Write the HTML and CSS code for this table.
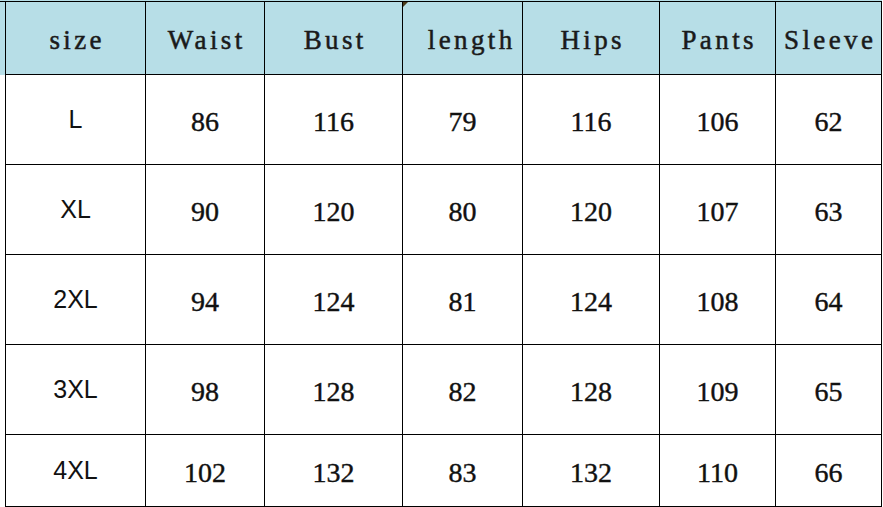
FILE: index.html
```html
<!DOCTYPE html>
<html>
<head>
<meta charset="utf-8">
<link rel="stylesheet" href="styles.css">
</head>
<body>
<div class="sheet">
  <div class="row head">
    <div class="stub"></div>
    <div class="cell c1">size</div>
    <div class="cell c2">Waist</div>
    <div class="cell c3">Bust</div>
    <div class="cell c4 marked"><span class="lead">length</span><i class="corner"></i></div>
    <div class="cell c5">Hips</div>
    <div class="cell c6">Pants</div>
    <div class="cell c7">Sleeve</div>
  </div>
  <div class="row">
    <div class="stub"></div>
    <div class="cell c1 sz">L</div>
    <div class="cell c2">86</div>
    <div class="cell c3">116</div>
    <div class="cell c4">79</div>
    <div class="cell c5">116</div>
    <div class="cell c6">106</div>
    <div class="cell c7">62</div>
  </div>
  <div class="row">
    <div class="stub"></div>
    <div class="cell c1 sz">XL</div>
    <div class="cell c2">90</div>
    <div class="cell c3">120</div>
    <div class="cell c4">80</div>
    <div class="cell c5">120</div>
    <div class="cell c6">107</div>
    <div class="cell c7">63</div>
  </div>
  <div class="row">
    <div class="stub"></div>
    <div class="cell c1 sz">2XL</div>
    <div class="cell c2">94</div>
    <div class="cell c3">124</div>
    <div class="cell c4">81</div>
    <div class="cell c5">124</div>
    <div class="cell c6">108</div>
    <div class="cell c7">64</div>
  </div>
  <div class="row">
    <div class="stub"></div>
    <div class="cell c1 sz">3XL</div>
    <div class="cell c2">98</div>
    <div class="cell c3">128</div>
    <div class="cell c4">82</div>
    <div class="cell c5">128</div>
    <div class="cell c6">109</div>
    <div class="cell c7">65</div>
  </div>
  <div class="row last">
    <div class="stub"></div>
    <div class="cell c1 sz">4XL</div>
    <div class="cell c2">102</div>
    <div class="cell c3">132</div>
    <div class="cell c4">83</div>
    <div class="cell c5">132</div>
    <div class="cell c6">110</div>
    <div class="cell c7">66</div>
  </div>
</div>
</body>
</html>
```
FILE: styles.css
```css
html, body {
  margin: 0;
  padding: 0;
  background: #ffffff;
}

.sheet {
  width: 883px;
  display: flex;
  flex-direction: column;
  font-family: "Liberation Serif", "Times New Roman", serif;
  color: #111;
}

.row {
  display: flex;
  height: 90px;
}

.row.head {
  height: 73px;
  background: #b7dee7;
  border-top: 1px solid #000;
  margin-top: 1px;
  box-shadow: 0 -1px 0 #b7dee7;
  width: 882px;
}

.row.last {
  height: 72px;
}

.stub {
  width: 5px;
  flex: none;
  border-right: 1px solid #000;
}

.cell {
  flex: none;
  box-sizing: border-box;
  border-right: 1px solid #000;
  border-bottom: 1px solid #000;
  display: flex;
  align-items: center;
  justify-content: center;
  font-size: 28px;
  padding-top: 4px;
  -webkit-text-stroke: 0.4px #111;
}

.head .cell {
  font-family: "Liberation Serif", "Times New Roman", serif;
  font-size: 27px;
  letter-spacing: 3.4px;
  padding-left: 3.4px;
  padding-top: 5px;
  color: #1a1a1a;
  -webkit-text-stroke: 0.5px #1a1a1a;
}

.sz {
  font-family: "Liberation Sans", Arial, sans-serif;
  font-size: 25px;
  padding-top: 0;
  color: #111;
  -webkit-text-stroke: 0;
}

.c1 { width: 140px; }
.c2 { width: 119px; }
.c3 { width: 138px; }
.c4 { width: 120px; }
.c5 { width: 137px; }
.c6 { width: 116px; }
.c7 { width: 106px; }

.marked {
  position: relative;
}

.lead {
  padding-left: 15px;
}

.corner {
  position: absolute;
  left: 0;
  top: 0;
  width: 0;
  height: 0;
  border-top: 5px solid #4a3a1a;
  border-right: 5px solid transparent;
}
```
